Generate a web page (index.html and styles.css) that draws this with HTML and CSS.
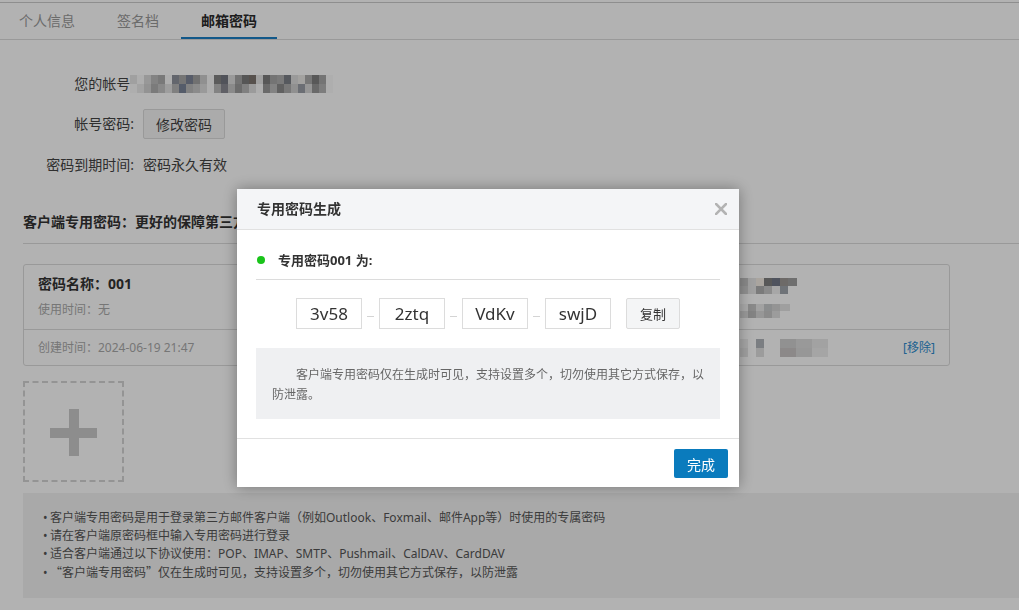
FILE: index.html
```html
<!DOCTYPE html>
<html lang="zh-CN">
<head>
<meta charset="utf-8">
<title>邮箱密码</title>
<link rel="stylesheet" href="styles.css">
</head>
<body>
<div class="page">
  <nav class="tabs">
    <a class="tab first">个人信息</a>
    <a class="tab">签名档</a>
    <a class="tab active">邮箱密码</a>
  </nav>
  <div class="content">
    <div class="form">
      <div class="row"><span class="label">您的帐号:</span><span class="mosaic acct"></span></div>
      <div class="row"><span class="label">帐号密码:</span><button class="btn">修改密码</button></div>
      <div class="row"><span class="label">密码到期时间:</span><span class="value">密码永久有效</span></div>
    </div>
    <h3 class="sec-title">客户端专用密码：更好的保障第三方客户端登录安全</h3>
    <div class="pw-card">
      <div class="pw-top">
        <div class="pw-main">
          <div class="pw-name">密码名称：001</div>
          <div class="pw-used">使用时间：无</div>
        </div>
        <div class="pw-side">
          <span class="mosaic m1"></span>
          <span class="mosaic m2"></span>
        </div>
      </div>
      <div class="pw-bottom">
        <div class="pw-main pw-created">创建时间：2024-06-19 21:47</div>
        <span class="mosaic m3"></span>
        <a class="remove">[移除]</a>
      </div>
    </div>
    <div class="add-box"></div>
    <ul class="notes">
      <li>客户端专用密码是用于登录第三方邮件客户端（例如Outlook、Foxmail、邮件App等）时使用的专属密码</li>
      <li>请在客户端原密码框中输入专用密码进行登录</li>
      <li>适合客户端通过以下协议使用：POP、IMAP、SMTP、Pushmail、CalDAV、CardDAV</li>
      <li><span class="q">“</span>客户端专用密码<span class="q">”</span>仅在生成时可见，支持设置多个，切勿使用其它方式保存，以防泄露</li>
    </ul>
  </div>
</div>

<div class="mask"></div>

<div class="modal">
  <div class="modal-head">
    <span class="modal-title">专用密码生成</span>
    <svg class="close" width="12" height="12" viewBox="0 0 12 12"><path d="M1 1 L11 11 M11 1 L1 11" stroke="#b3b3b3" stroke-width="2.6" stroke-linecap="square"/></svg>
  </div>
  <div class="modal-body">
    <div class="status"><span class="dot"></span><span class="status-text">专用密码001 为:</span></div>
    <div class="codes">
      <span class="code">3v58</span><span class="dash"></span>
      <span class="code">2ztq</span><span class="dash"></span>
      <span class="code">VdKv</span><span class="dash"></span>
      <span class="code">swjD</span>
      <button class="copy">复制</button>
    </div>
    <p class="notice">客户端专用密码仅在生成时可见，支持设置多个，切勿使用其它方式保存，以防泄露。</p>
  </div>
  <div class="modal-foot">
    <button class="done">完成</button>
  </div>
</div>
</body>
</html>
```

FILE: styles.css
```css
html, body {
  margin: 0;
  padding: 0;
  background: #fff;
  font-family: "Noto Sans", "Noto Sans CJK SC", sans-serif;
  font-size: 14px;
  color: #444;
}

.page {
  width: 1019px;
  height: 610px;
  overflow: hidden;
  padding-top: 2px;
  box-sizing: border-box;
}

/* tabs */
.tabs {
  display: flex;
  gap: 2px;
  height: 36px;
  border-top: 1px solid #cccccc;
  border-bottom: 1px solid #dcdcdc;
}
.tab {
  padding: 0 20px;
  line-height: 36px;
  font-size: 14px;
  color: #9a9a9a;
}
.tab.first { padding-left: 19px; }
.tab.active {
  color: #2a2a2a;
  font-weight: bold;
  box-shadow: inset 0 -2px 0 #1a7fc4;
}

.content {
  padding-left: 23px;
}

/* account form */
.form {
  padding-top: 29px;
  display: flex;
  flex-direction: column;
  gap: 10px;
}
.row {
  display: flex;
  align-items: center;
  height: 30px;
}
.row:last-child { margin-top: 1px; }
.label {
  width: 111px;
  padding-right: 9px;
  text-align: right;
  line-height: 20px;
  color: #444;
}
.value { line-height: 20px; color: #444; }
.btn {
  height: 30px;
  padding: 0 12px;
  background: #f5f5f5;
  border: 1px solid #dcdcdc;
  border-radius: 2px;
  font-family: inherit;
  font-size: 14px;
  color: #444;
}

/* mosaics (blurred private data) */
.mosaic { display: inline-block; flex: none; }
.acct {
  width: 203px;
  height: 18px;
  margin-left: -13px;
  filter: brightness(0.88) contrast(1.25);
  background:
    linear-gradient(90deg, #eee 0 7px, #fff 7px 14px, #e3e3e3 14px 21px, #c8c8c8 21px 28px, #bbb 28px 35px, #fff 35px 42px, #9ea3ab 42px 49px, #b6b6b6 49px 56px, #8f96a6 56px 63px, #b0b0b0 63px 70px, #d8d8d8 70px 77px, #fff 77px 84px, #969696 84px 91px, #868a93 91px 98px, #e6e6e6 98px 105px, #b3b3b3 105px 112px, #8e8e8e 112px 119px, #8f8682 119px 126px, #ededed 126px 133px, #8f8f8f 133px 140px, #b4b4b4 140px 147px, #bcbcbc 147px 154px, #8e9198 154px 161px, #e6e6e6 161px 168px, #f2f0ee 168px 175px, #b8b8b8 175px 182px, #909090 182px 189px, #b5b5b5 189px 196px, #fff 196px 203px) top / 100% 9px no-repeat,
    linear-gradient(90deg, #fff 0 7px, #f2f2f2 7px 14px, #ddd 14px 21px, #bdbdbd 21px 28px, #d0d0d0 28px 35px, #ebebeb 35px 42px, #c4c4c4 42px 49px, #8c96a8 49px 56px, #c7c7c7 56px 63px, #d2d2d2 63px 70px, #e6e6e6 70px 77px, #fff 77px 84px, #c8c8c8 84px 91px, #9a9aa2 91px 98px, #d1d1d1 98px 105px, #aaa 105px 112px, #c4c4c4 112px 119px, #e8e8e8 119px 126px, #fff 126px 133px, #a8a8a8 133px 140px, #c8c8c8 140px 147px, #9c9c9c 147px 154px, #b9b9b9 154px 161px, #d9d9d9 161px 168px, #a9adb5 168px 175px, #e0e0e0 175px 182px, #a6a6a6 182px 189px, #c0c0c0 189px 196px, #fff 196px 203px) bottom / 100% 9px no-repeat;
}
.m1 {
  width: 57px;
  height: 16px;
  margin-bottom: 10px;
  background:
    linear-gradient(90deg, #c5c5c5 0 8px, #e5e5e5 8px 16px, #f4ece4 16px 24px, #7e7e7e 24px 32px, #727887 32px 40px, #9d9895 40px 48px, #a0a0a0 48px 57px) top / 100% 8px no-repeat,
    linear-gradient(90deg, #cecece 0 8px, #e5e5e5 8px 16px, #b0b0b0 16px 24px, #c8c8c8 24px 32px, #f0f0f0 32px 40px, #a0a5ac 40px 48px, #fff 48px 57px) bottom / 100% 8px no-repeat;
}
.m2 {
  width: 50px;
  height: 14px;
  background:
    linear-gradient(90deg, #f4f4f4 0 8px, #c4c4c4 8px 16px, #e8e8e8 16px 24px, #c8cacc 24px 32px, #d5d5d5 32px 40px, #e4e4e4 40px 50px) top / 100% 7px no-repeat,
    linear-gradient(90deg, #ddd 0 8px, #bcbcbc 8px 16px, #d8d8d8 16px 24px, #c8c8c8 24px 32px, #e0e0e0 32px 40px, #fff 40px 50px) bottom / 100% 7px no-repeat;
}
.m3 {
  width: 88px;
  height: 18px;
  background:
    linear-gradient(90deg, #eee 0 8px, #fff 8px 16px, #b0b5ba 16px 24px, #fff 24px 40px, #d0d0d0 40px 56px, #dcdcdc 56px 72px, #e8e8e8 72px 88px) top / 100% 9px no-repeat,
    linear-gradient(90deg, #e6e6e6 0 8px, #fff 8px 16px, #e0e0e0 16px 24px, #fff 24px 40px, #c9c5c5 40px 56px, #d8d8d8 56px 72px, #ececec 72px 88px) bottom / 100% 9px no-repeat;
}

/* section title */
.sec-title {
  margin: 32px 0 0;
  padding-bottom: 11px;
  border-bottom: 1px solid #dcdcdc;
  font-size: 14px;
  line-height: 20px;
  font-weight: bold;
  color: #333;
}

/* password card */
.pw-card {
  margin-top: 20px;
  width: 927px;
  box-sizing: border-box;
  border: 1px solid #dcdcdc;
  border-radius: 3px;
}
.pw-top {
  display: flex;
  padding: 9px 14px 10px;
  border-bottom: 1px solid #dcdcdc;
}
.pw-main { flex: 0 0 702px; }
.pw-name {
  font-size: 14px;
  line-height: 20px;
  font-weight: bold;
  color: #333;
}
.pw-used {
  margin-top: 7px;
  font-size: 12px;
  line-height: 18px;
  color: #aaa;
}
.pw-side {
  display: flex;
  flex-direction: column;
  align-items: flex-start;
  padding-top: 4px;
}
.pw-bottom {
  display: flex;
  align-items: center;
  padding: 9px 14px 8px;
  font-size: 12px;
  line-height: 18px;
}
.pw-created { color: #aaa; }
.remove {
  margin-left: auto;
  font-size: 12px;
  color: #2d8ccf;
}

/* add box */
.add-box {
  margin-top: 15px;
  width: 101px;
  height: 101px;
  box-sizing: border-box;
  border: 2px dashed #d5d5d5;
  background:
    linear-gradient(#cbcbcb, #cbcbcb) 25px 45px / 47px 10px no-repeat,
    linear-gradient(#cbcbcb, #cbcbcb) 44px 26px / 10px 47px no-repeat;
}

/* notes */
.notes {
  margin: 11px 0 0;
  padding: 16px 20px;
  list-style: none;
  background: #f2f2f2;
  font-size: 12px;
  line-height: 18px;
  color: #555;
}
.notes li::before {
  content: "•";
  display: inline-block;
  width: 7px;
}
.q {
  display: inline-block;
  width: 12px;
  font-family: "Noto Sans CJK SC", sans-serif;
}
.q:first-child { text-align: right; }

/* mask + modal */
.mask {
  position: fixed;
  inset: 0;
  background: rgba(0, 0, 0, 0.3);
}
.modal {
  position: fixed;
  left: 237px;
  top: 189px;
  width: 502px;
  background: #fff;
  box-shadow: 0 0 14px rgba(0, 0, 0, 0.35);
}
.modal-head {
  display: flex;
  align-items: center;
  justify-content: space-between;
  height: 40px;
  padding: 0 12px 0 20px;
  background: #f4f5f7;
  border-bottom: 1px solid #e1e1e1;
}
.modal-title {
  font-size: 14px;
  font-weight: bold;
  color: #333;
  line-height: 20px;
}
.close { display: block; }

.modal-body {
  padding: 20px 19px 19px;
}
.status {
  display: flex;
  align-items: center;
  padding-bottom: 9px;
  border-bottom: 1px solid #dcdcdc;
  height: 20px;
}
.dot {
  width: 8px;
  height: 8px;
  border-radius: 50%;
  background: #19c41a;
  margin: 0 13px 0 1px;
}
.status-text {
  font-size: 13px;
  font-weight: bold;
  color: #333;
  line-height: 20px;
}

.codes {
  margin-top: 18px;
  display: flex;
  align-items: center;
  justify-content: center;
}
.code {
  width: 66px;
  height: 31px;
  box-sizing: border-box;
  border: 1px solid #dcdcdc;
  text-align: center;
  font-size: 17px;
  line-height: 29px;
  color: #333;
}
.dash {
  width: 7px;
  height: 1px;
  margin: 5px 5px 0;
  background: #d4d4d4;
}
.copy {
  margin-left: 15px;
  width: 54px;
  height: 31px;
  background: #f4f5f6;
  border: 1px solid #dcdcdc;
  border-radius: 2px;
  font-family: inherit;
  font-size: 13px;
  color: #333;
  padding: 0;
}

.notice {
  margin: 19px 0 0;
  padding: 17px 16px 14px;
  background: #eff0f2;
  font-size: 12px;
  line-height: 20px;
  text-indent: 24px;
  color: #666;
}

.modal-foot {
  border-top: 1px solid #e1e1e1;
  padding: 10px 11px 9px;
  display: flex;
  justify-content: flex-end;
}
.done {
  width: 54px;
  height: 29px;
  padding: 0;
  border: none;
  border-radius: 2px;
  background: #0a7bbd;
  color: #fff;
  font-family: inherit;
  font-size: 14px;
}
```
